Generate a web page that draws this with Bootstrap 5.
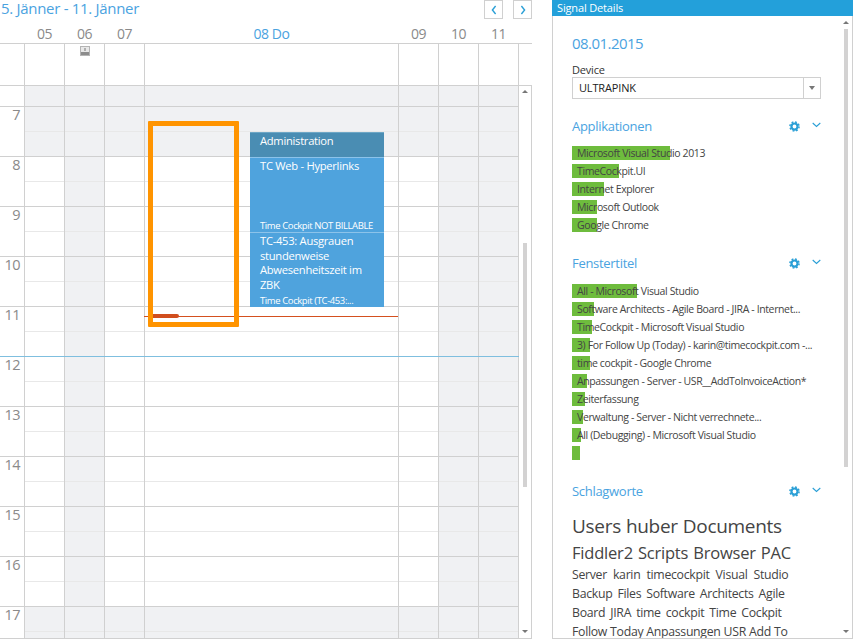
<!DOCTYPE html>
<html lang="de">
<head>
<meta charset="utf-8">
<title>Signal Details</title>
<link href="https://cdn.jsdelivr.net/npm/bootstrap@5.3.0/dist/css/bootstrap.min.css" rel="stylesheet">
<style>
html,body{height:100%;overflow:hidden;background:#fff}
body{font-family:"Open Sans","Noto Sans",sans-serif;font-size:11px;color:#444}
.tc-app{width:853px;height:639px;overflow:hidden}
.tc-left{width:532px;flex:none}
.tc-topbar{height:24px}
.tc-title{font-size:15px;line-height:17px;color:#4aa3df;font-weight:400;letter-spacing:-.3px;margin:0 0 0 1px}
.tc-navs{gap:10px}
.tc-nav{width:19px;height:19px;padding:0;border:1px solid #d0d0d0;border-radius:0;background:#fff;display:flex;align-items:center;justify-content:center}
.tc-nav svg{display:block}
.tc-grid{display:grid;grid-template-columns:24px 40px 40px 40px 254px 40px 40px 40px}
.tc-days{height:20px;border-bottom:1px solid #d0d0d0;font-size:14px;line-height:20px;color:#8a8a8a;text-align:center;letter-spacing:-.4px;text-indent:1px}
.tc-today{color:#4aa3df}
.tc-allday{height:42px;border-bottom:1px solid #d0d0d0;grid-template-columns:24px 40px 40px 40px 254px 40px 40px 40px 14px}
.tc-ad{border-left:1px solid #d0d0d0;text-align:center}
.tc-ad svg{display:block;margin:2px auto 0}
.tc-pane{height:553px;border-bottom:1px solid #d0d0d0;border-right:1px solid #d0d0d0;overflow:hidden}
.tc-rows{width:518px;flex:none}
.tc-cell{height:49px;border-left:1px solid #d0d0d0;background:linear-gradient(#e8e8e8,#e8e8e8) 0 24px/100% 1px no-repeat}
.tc-off{background-color:#f0f1f3}
.tc-hour{height:50px;border-bottom:1px solid #d0d0d0}
.tc-pre{height:21px;border-bottom:1px solid #d0d0d0}
.tc-pre .tc-cell{height:20px;background-image:none}
.tc-lbl{font-size:14.5px;line-height:16px;color:#8a8a8a;text-align:right;padding-right:4px;letter-spacing:-.5px}
.tc-sbar{flex:1;border-left:1px solid #d0d0d0}
.tc-thumb{background:#d3d2d2;width:4px}
.tc-thumb-l{height:244px;margin:157px auto 0 4px}
.tc-up,.tc-down{width:0;height:0;border-left:3px solid transparent;border-right:3px solid transparent}
.tc-up{border-bottom:3px solid #777}
.tc-down{border-top:3px solid #777}
.tc-up-l{position:absolute;right:3px;top:4px}
.tc-down-l{position:absolute;right:3px;bottom:5px}
.tc-evt{position:absolute;left:250px;width:134px;color:#fff;padding:1px 6px 0 10px;font-size:11.2px;line-height:14.7px;letter-spacing:-.28px;background:#4fa3dd;border-top:1px solid #8cc3ea;overflow:hidden}
.tc-evt-a{top:46px;height:25px;background:#4a8db3;border-top-color:#6ea7c6}
.tc-evt-b{top:71px;height:75px}
.tc-evt-c{top:146px;height:75px}
.tc-sub{font-size:9.5px;line-height:12px;letter-spacing:-.4px;white-space:nowrap}
.tc-box{position:absolute;left:148px;top:35px;width:91px;height:206px;border:5px solid #ff9400;border-radius:1px}
.tc-now{position:absolute;left:144px;top:230px;width:254px;height:1px;background:#d4501f}
.tc-nowbar{position:absolute;left:153px;top:228px;width:26px;height:4px;background:#d14e1e;border-radius:0 2px 2px 0}
.tc-blue{position:absolute;left:0;top:270px;width:519px;height:1px;background:#7fbfdf}
.tc-right{width:301px;flex:none;margin-left:20px}
.tc-rhead{height:16px;background:#23a0da;color:#fff;font-size:11px;line-height:16px;padding-left:5px;letter-spacing:-.15px}
.tc-rbody{height:623px;border:1px solid #d0d0d0;border-top:0;overflow:hidden}
.tc-content{width:290px;flex:none;padding:16px 0 0 19px}
.tc-date{font-size:15px;line-height:22px;color:#4aa3df;letter-spacing:-.55px}
.tc-label{font-size:11px;line-height:15px;margin-top:8px;letter-spacing:-.2px;color:#333}
.tc-select{height:22px;width:249px;border:1px solid #d0d0d0;line-height:20px;color:#222}
.tc-select span{padding-left:6px;letter-spacing:-.15px}
.tc-drop{width:17px;border-left:1px solid #d0d0d0}
.tc-drop i{display:block;width:0;height:0;border-left:3.5px solid transparent;border-right:3.5px solid transparent;border-top:4px solid #777}
.tc-shead{height:20px;margin-top:18px;width:249px}
.tc-tools{gap:12px;margin-top:-1px}
.tc-chev{margin-top:-3px}
.tc-stitle{font-size:13px;line-height:18px;color:#4aa3df;font-weight:400;margin:0 0 2px;letter-spacing:-.3px}
.tc-list{margin:9px 0 0;padding:0;list-style:none}
.tc-list-w{margin-top:10px}
.tc-item{position:relative;height:18px;line-height:14px;width:249px;padding-left:5px;color:#444;letter-spacing:-.38px;font-size:10.5px;white-space:nowrap}
.tc-bar{position:absolute;left:0;top:0;height:14px;background:#6ebc3d}
.tc-txt{position:relative}
.tc-line{display:flex;white-space:nowrap;color:#444}
.tc-t1{font-size:19px;line-height:26px;column-gap:5px;margin-top:11px;letter-spacing:-.3px}
.tc-t2{font-size:16.5px;line-height:25px;column-gap:5px;letter-spacing:-.2px;margin-top:1px}
.tc-t3{font-size:12.3px;line-height:19px;column-gap:5px;letter-spacing:-.3px}
.tc-wide{column-gap:6px}
.tc-tight{column-gap:3px}
.tc-sb-r{flex:1;padding-top:5px}
.tc-thumb-r{height:438px;margin:5px 0 0 1px}
.tc-sb-r .tc-down{margin-top:163px}
</style>
</head>
<body>
<div class="tc-app d-flex">
  <section class="tc-left d-flex flex-column">
    <div class="tc-topbar d-flex justify-content-between align-items-start">
      <h1 class="tc-title">5. Jänner - 11. Jänner</h1>
      <div class="d-flex tc-navs">
        <button class="btn tc-nav" aria-label="Zurück"><svg width="6" height="10" viewBox="0 0 6 10"><path d="M4.6 1 1.4 5l3.2 4" fill="none" stroke="#2a9fd6" stroke-width="1.4"/></svg></button>
        <button class="btn tc-nav" aria-label="Weiter"><svg width="6" height="10" viewBox="0 0 6 10"><path d="M1.4 1 4.6 5 1.4 9" fill="none" stroke="#2a9fd6" stroke-width="1.4"/></svg></button>
      </div>
    </div>
    <div class="tc-grid tc-days">
      <div></div><div>05</div><div>06</div><div>07</div><div class="tc-today">08 Do</div><div>09</div><div>10</div><div>11</div>
    </div>
    <div class="tc-grid tc-allday">
      <div></div><div class="tc-ad"></div>
      <div class="tc-ad"><svg width="10" height="10" viewBox="0 0 10 10"><rect x=".5" y=".5" width="9" height="9" fill="#e8e8e8" stroke="#b4b4b4"/><rect x="1" y="6" width="8" height="3" fill="#8c8c8c"/><rect x="4.5" y="2" width="1" height="3" fill="#777"/></svg></div>
      <div class="tc-ad"></div><div class="tc-ad"></div><div class="tc-ad"></div><div class="tc-ad"></div><div class="tc-ad"></div><div class="tc-ad"></div>
    </div>
    <div class="tc-pane d-flex position-relative">
      <div class="tc-rows">
        <div class="tc-grid tc-pre"><div></div><div class="tc-cell tc-off"></div><div class="tc-cell tc-off"></div><div class="tc-cell tc-off"></div><div class="tc-cell tc-off"></div><div class="tc-cell tc-off"></div><div class="tc-cell tc-off"></div><div class="tc-cell tc-off"></div></div>
        <div class="tc-grid tc-hour"><div class="tc-lbl">7</div><div class="tc-cell tc-off"></div><div class="tc-cell tc-off"></div><div class="tc-cell tc-off"></div><div class="tc-cell tc-off"></div><div class="tc-cell tc-off"></div><div class="tc-cell tc-off"></div><div class="tc-cell tc-off"></div></div>
        <div class="tc-grid tc-hour"><div class="tc-lbl">8</div><div class="tc-cell"></div><div class="tc-cell tc-off"></div><div class="tc-cell"></div><div class="tc-cell"></div><div class="tc-cell"></div><div class="tc-cell tc-off"></div><div class="tc-cell tc-off"></div></div>
        <div class="tc-grid tc-hour"><div class="tc-lbl">9</div><div class="tc-cell"></div><div class="tc-cell tc-off"></div><div class="tc-cell"></div><div class="tc-cell"></div><div class="tc-cell"></div><div class="tc-cell tc-off"></div><div class="tc-cell tc-off"></div></div>
        <div class="tc-grid tc-hour"><div class="tc-lbl">10</div><div class="tc-cell"></div><div class="tc-cell tc-off"></div><div class="tc-cell"></div><div class="tc-cell"></div><div class="tc-cell"></div><div class="tc-cell tc-off"></div><div class="tc-cell tc-off"></div></div>
        <div class="tc-grid tc-hour"><div class="tc-lbl">11</div><div class="tc-cell"></div><div class="tc-cell tc-off"></div><div class="tc-cell"></div><div class="tc-cell"></div><div class="tc-cell"></div><div class="tc-cell tc-off"></div><div class="tc-cell tc-off"></div></div>
        <div class="tc-grid tc-hour"><div class="tc-lbl">12</div><div class="tc-cell"></div><div class="tc-cell tc-off"></div><div class="tc-cell"></div><div class="tc-cell"></div><div class="tc-cell"></div><div class="tc-cell tc-off"></div><div class="tc-cell tc-off"></div></div>
        <div class="tc-grid tc-hour"><div class="tc-lbl">13</div><div class="tc-cell"></div><div class="tc-cell tc-off"></div><div class="tc-cell"></div><div class="tc-cell"></div><div class="tc-cell"></div><div class="tc-cell tc-off"></div><div class="tc-cell tc-off"></div></div>
        <div class="tc-grid tc-hour"><div class="tc-lbl">14</div><div class="tc-cell"></div><div class="tc-cell tc-off"></div><div class="tc-cell"></div><div class="tc-cell"></div><div class="tc-cell"></div><div class="tc-cell tc-off"></div><div class="tc-cell tc-off"></div></div>
        <div class="tc-grid tc-hour"><div class="tc-lbl">15</div><div class="tc-cell"></div><div class="tc-cell tc-off"></div><div class="tc-cell"></div><div class="tc-cell"></div><div class="tc-cell"></div><div class="tc-cell tc-off"></div><div class="tc-cell tc-off"></div></div>
        <div class="tc-grid tc-hour"><div class="tc-lbl">16</div><div class="tc-cell"></div><div class="tc-cell tc-off"></div><div class="tc-cell"></div><div class="tc-cell"></div><div class="tc-cell"></div><div class="tc-cell tc-off"></div><div class="tc-cell tc-off"></div></div>
        <div class="tc-grid tc-hour"><div class="tc-lbl">17</div><div class="tc-cell tc-off"></div><div class="tc-cell tc-off"></div><div class="tc-cell tc-off"></div><div class="tc-cell tc-off"></div><div class="tc-cell tc-off"></div><div class="tc-cell tc-off"></div><div class="tc-cell tc-off"></div></div>
      </div>
      <div class="tc-sbar"><div class="tc-thumb tc-thumb-l"></div></div>
      <div class="tc-up tc-up-l"></div>
      <div class="tc-down tc-down-l"></div>
      <div class="tc-now"></div>
      <div class="tc-nowbar"></div>
      <div class="tc-blue"></div>
      <div class="tc-box"></div>
      <div class="tc-evt tc-evt-a">Administration</div>
      <div class="tc-evt tc-evt-b d-flex flex-column justify-content-between"><div>TC Web - Hyperlinks</div><div class="tc-sub">Time Cockpit NOT BILLABLE</div></div>
      <div class="tc-evt tc-evt-c d-flex flex-column justify-content-between"><div>TC-453: Ausgrauen stundenweise Abwesenheitszeit im ZBK</div><div class="tc-sub">Time Cockpit (TC-453:...</div></div>
    </div>
  </section>
  <section class="tc-right">
    <div class="tc-rhead">Signal Details</div>
    <div class="tc-rbody d-flex">
      <div class="tc-content">
        <div class="tc-date">08.01.2015</div>
        <div class="tc-label">Device</div>
        <div class="tc-select d-flex justify-content-between"><span>ULTRAPINK</span><div class="tc-drop d-flex align-items-center justify-content-center"><i></i></div></div>

        <div class="tc-shead d-flex justify-content-between align-items-center">
          <h2 class="tc-stitle">Applikationen</h2>
          <div class="d-flex align-items-center tc-tools">
            <svg width="11" height="11" viewBox="0 0 12 12"><circle cx="6" cy="6" r="3.3" fill="none" stroke="#2a9fd6" stroke-width="2.4"/><circle cx="6" cy="6" r="5" fill="none" stroke="#2a9fd6" stroke-width="1.6" stroke-dasharray="2 1.93"/></svg>
            <svg class="tc-chev" width="9" height="6" viewBox="0 0 9 6"><path d="M.7 1 4.5 4.4 8.3 1" fill="none" stroke="#2a9fd6" stroke-width="1.1"/></svg>
          </div>
        </div>
        <ul class="tc-list">
          <li class="tc-item"><div class="tc-bar" style="width:98px"></div><span class="tc-txt">Microsoft Visual Studio 2013</span></li>
          <li class="tc-item"><div class="tc-bar" style="width:47px"></div><span class="tc-txt">TimeCockpit.UI</span></li>
          <li class="tc-item"><div class="tc-bar" style="width:32px"></div><span class="tc-txt">Internet Explorer</span></li>
          <li class="tc-item"><div class="tc-bar" style="width:25px"></div><span class="tc-txt">Microsoft Outlook</span></li>
          <li class="tc-item"><div class="tc-bar" style="width:25px"></div><span class="tc-txt">Google Chrome</span></li>
        </ul>

        <div class="tc-shead d-flex justify-content-between align-items-center">
          <h2 class="tc-stitle">Fenstertitel</h2>
          <div class="d-flex align-items-center tc-tools">
            <svg width="11" height="11" viewBox="0 0 12 12"><circle cx="6" cy="6" r="3.3" fill="none" stroke="#2a9fd6" stroke-width="2.4"/><circle cx="6" cy="6" r="5" fill="none" stroke="#2a9fd6" stroke-width="1.6" stroke-dasharray="2 1.93"/></svg>
            <svg class="tc-chev" width="9" height="6" viewBox="0 0 9 6"><path d="M.7 1 4.5 4.4 8.3 1" fill="none" stroke="#2a9fd6" stroke-width="1.1"/></svg>
          </div>
        </div>
        <ul class="tc-list tc-list-w">
          <li class="tc-item"><div class="tc-bar" style="width:65px"></div><span class="tc-txt">All - Microsoft Visual Studio</span></li>
          <li class="tc-item"><div class="tc-bar" style="width:22px"></div><span class="tc-txt">Software Architects - Agile Board - JIRA - Internet...</span></li>
          <li class="tc-item"><div class="tc-bar" style="width:20px"></div><span class="tc-txt">TimeCockpit - Microsoft Visual Studio</span></li>
          <li class="tc-item"><div class="tc-bar" style="width:18px"></div><span class="tc-txt">3) For Follow Up (Today) - karin@timecockpit.com -...</span></li>
          <li class="tc-item"><div class="tc-bar" style="width:18px"></div><span class="tc-txt">time cockpit - Google Chrome</span></li>
          <li class="tc-item"><div class="tc-bar" style="width:15px"></div><span class="tc-txt">Anpassungen - Server - USR__AddToInvoiceAction*</span></li>
          <li class="tc-item"><div class="tc-bar" style="width:13px"></div><span class="tc-txt">Zeiterfassung</span></li>
          <li class="tc-item"><div class="tc-bar" style="width:11px"></div><span class="tc-txt">Verwaltung - Server - Nicht verrechnete...</span></li>
          <li class="tc-item"><div class="tc-bar" style="width:9px"></div><span class="tc-txt">All (Debugging) - Microsoft Visual Studio</span></li>
          <li class="tc-item"><div class="tc-bar" style="width:8px"></div></li>
        </ul>

        <div class="tc-shead d-flex justify-content-between align-items-center">
          <h2 class="tc-stitle">Schlagworte</h2>
          <div class="d-flex align-items-center tc-tools">
            <svg width="11" height="11" viewBox="0 0 12 12"><circle cx="6" cy="6" r="3.3" fill="none" stroke="#2a9fd6" stroke-width="2.4"/><circle cx="6" cy="6" r="5" fill="none" stroke="#2a9fd6" stroke-width="1.6" stroke-dasharray="2 1.93"/></svg>
            <svg class="tc-chev" width="9" height="6" viewBox="0 0 9 6"><path d="M.7 1 4.5 4.4 8.3 1" fill="none" stroke="#2a9fd6" stroke-width="1.1"/></svg>
          </div>
        </div>
        <div class="tc-line tc-t1"><span>Users</span><span>huber</span><span>Documents</span></div>
        <div class="tc-line tc-t2"><span>Fiddler2</span><span>Scripts</span><span>Browser</span><span>PAC</span></div>
        <div class="tc-line tc-t3 tc-wide"><span>Server</span><span>karin</span><span>timecockpit</span><span>Visual</span><span>Studio</span></div>
        <div class="tc-line tc-t3"><span>Backup</span><span>Files</span><span>Software</span><span>Architects</span><span>Agile</span></div>
        <div class="tc-line tc-t3"><span>Board</span><span>JIRA</span><span>time</span><span>cockpit</span><span>Time</span><span>Cockpit</span></div>
        <div class="tc-line tc-t3 tc-tight"><span>Follow</span><span>Today</span><span>Anpassungen</span><span>USR</span><span>Add</span><span>To</span></div>
      </div>
      <div class="tc-sb-r">
        <div class="tc-up"></div>
        <div class="tc-thumb tc-thumb-r"></div>
        <div class="tc-down"></div>
      </div>
    </div>
  </section>
</div>
<script src="https://cdn.jsdelivr.net/npm/bootstrap@5.3.0/dist/js/bootstrap.bundle.min.js"></script>
</body>
</html>
